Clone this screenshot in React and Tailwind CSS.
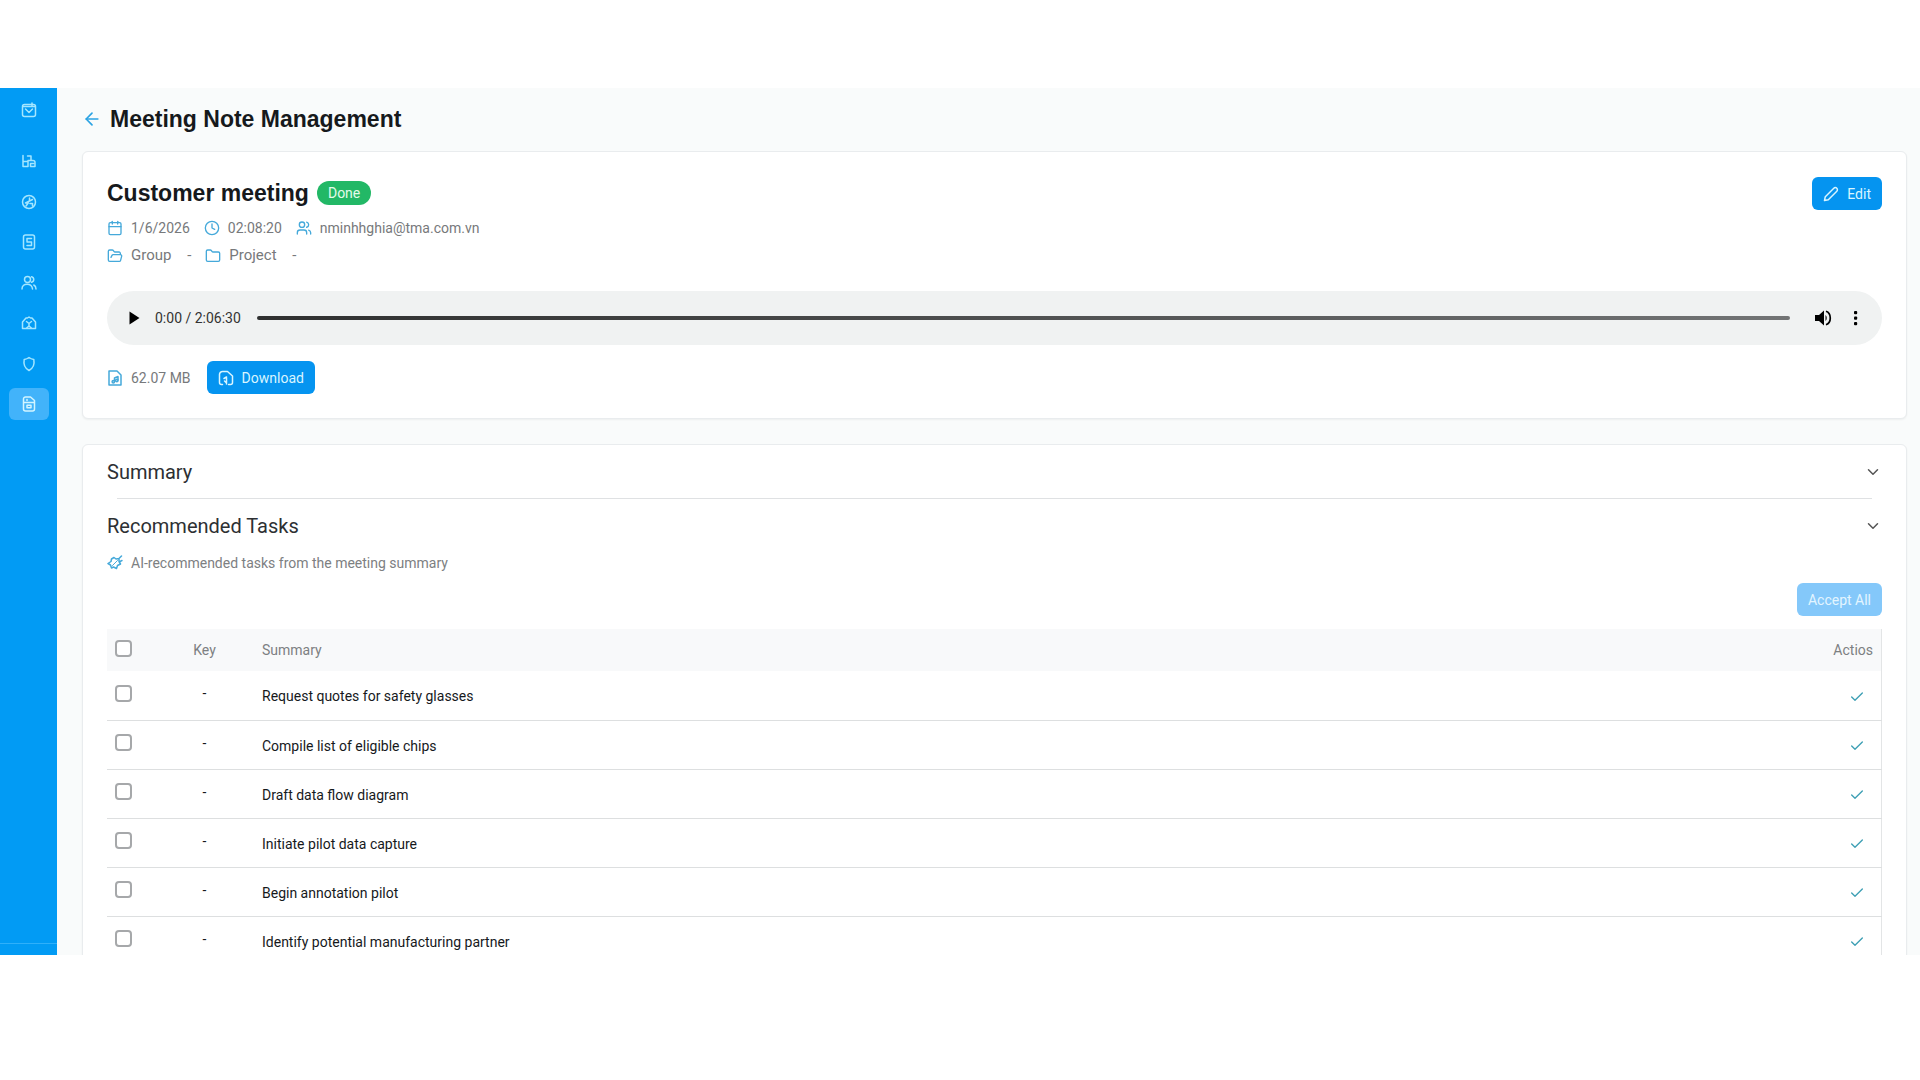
import { useState } from 'react'
import clsx from 'clsx'
import { ArrowLeft, Calendar, Check, ChevronDown, Clock4, Folder, FolderOpen, Users } from 'lucide-react'

const TASKS = [
  'Request quotes for safety glasses',
  'Compile list of eligible chips',
  'Draft data flow diagram',
  'Initiate pilot data capture',
  'Begin annotation pilot',
  'Identify potential manufacturing partner',
]

const NAV = [
  { id: 'reports', label: 'Reports', icon: ReportsIcon },
  { id: 'accounts', label: 'Accounts', icon: AccountIcon },
  { id: 'records', label: 'Records', icon: RecordsIcon },
  { id: 'people', label: 'People', icon: PeopleIcon },
  { id: 'office', label: 'Office', icon: OfficeIcon },
  { id: 'security', label: 'Security', icon: ShieldIcon },
  { id: 'notes', label: 'Meeting notes', icon: NotesIcon },
]

export default function App() {
  return (
    <div className="flex h-screen bg-white pt-[88px] pb-[125px] font-['Roboto',sans-serif] text-sm text-[#16191c]">
      <Sidebar />
      <main className="min-w-0 flex-1 overflow-hidden bg-[#f9fbfb] pr-[13px] pl-[25px]">
        <header className="flex h-[63px] items-center gap-2 pb-0.5">
          <a href="#back" aria-label="Back" className="text-[#2ba3e3]">
            <ArrowLeft size={20} strokeWidth={2} />
          </a>
          <h1 className="font-['Liberation_Sans',sans-serif] text-[23px] leading-8 font-bold">
            Meeting Note Management
          </h1>
        </header>
        <MeetingCard />
        <DetailsCard />
      </main>
    </div>
  )
}

function Sidebar() {
  return (
    <nav className="flex w-[57px] shrink-0 flex-col items-center bg-[#029bf4] pt-1.5 text-[#a4e6ff]">
      <a href="#home" aria-label="Home" className="flex h-8 w-10 items-center justify-center">
        <HomeIcon />
      </a>
      <div className="mt-[19px] flex h-[275px] flex-col justify-between">
        {NAV.map(({ id, label, icon: Icon }) => (
          <a
            key={id}
            href={`#${id}`}
            aria-label={label}
            className={clsx(
              'flex h-8 w-10 items-center justify-center rounded-md',
              id === 'notes' && 'bg-[#42b3fa] text-[#d3f5ff]',
            )}
          >
            <Icon />
          </a>
        ))}
      </div>
      <div className="mt-auto h-3 w-full border-t border-[#2fb0fa]" />
    </nav>
  )
}

function MeetingCard() {
  return (
    <section className="rounded-md border border-[#e9ecee] bg-white px-6 pt-[25px] pb-6 shadow-xs">
      <div className="flex items-start justify-between">
        <div>
          <div className="flex h-8 items-center gap-2">
            <h2 className="font-['Liberation_Sans',sans-serif] text-[23px] leading-8 font-bold">
              Customer meeting
            </h2>
            <span className="rounded-full bg-[#22b866] px-[11px] leading-6 text-[#e4fbe9]">Done</span>
          </div>
          <div className="mt-[5px] flex h-7 items-center gap-3.5">
            <Meta icon={Calendar}>1/6/2026</Meta>
            <Meta icon={Clock4}>02:08:20</Meta>
            <Meta icon={Users}>nminhhghia@tma.com.vn</Meta>
          </div>
          <div className="flex h-7 items-center gap-3.5 text-[15px]">
            <Meta icon={FolderOpen}>
              Group <span className="ml-3">-</span>
            </Meta>
            <Meta icon={Folder}>
              Project <span className="ml-3">-</span>
            </Meta>
          </div>
        </div>
        <button className="flex h-[33px] items-center gap-2 rounded-md bg-[#0594f0] px-[11px] text-[#d9f5ff]">
          <PencilIcon />
          Edit
        </button>
      </div>

      <Player />

      <div className="mt-4 flex items-center gap-4">
        <span className="flex items-center gap-2 text-[#77797b]">
          <AudioFileIcon />
          62.07 MB
        </span>
        <button className="flex h-[33px] items-center gap-2 rounded-md bg-[#0594f0] px-[11px] text-[#d9f5ff]">
          <DownloadIcon />
          Download
        </button>
      </div>
    </section>
  )
}

function Meta({ icon: Icon, children }) {
  return (
    <span className="flex items-center gap-2 text-[#77797b]">
      <Icon size={16} strokeWidth={2} className="text-[#45a9da]" />
      <span>{children}</span>
    </span>
  )
}

function Player() {
  return (
    <div className="mt-[21px] flex h-[54px] items-center rounded-full bg-[#f0f2f2] pr-[18px] pl-[22px] text-black">
      <button aria-label="Play">
        <svg width="12" height="14" viewBox="0 0 12 14" fill="currentColor">
          <path d="M0.5 0.5L10.5 7L0.5 13.5Z" />
        </svg>
      </button>
      <span className="ml-3.5 text-[#333]">0:00 / 2:06:30</span>
      <div className="mr-6 ml-4 h-1 flex-1 rounded-full bg-linear-to-r from-[#2f3030] to-[#727475]" />
      <button aria-label="Mute">
        <svg width="18" height="18" viewBox="0 0 18 18" fill="none">
          <path d="M1 6h4l5-4.500v15L5 12H1z" fill="currentColor" />
          <path d="M11.500 6c1.700 1.300 1.700 4.700 0 6z" fill="currentColor" />
          <path d="M12 2.300c5.700 2 5.700 11.400 0 13.400" stroke="currentColor" strokeWidth="1.700" />
        </svg>
      </button>
      <button aria-label="More options" className="ml-4">
        <svg width="16" height="16" viewBox="0 0 16 16" fill="currentColor">
          <rect x="6" y="1" width="3.200" height="3.200" rx="1" />
          <rect x="6" y="6.500" width="3.200" height="3.200" rx="1" />
          <rect x="6" y="12" width="3.200" height="3.200" rx="1" />
        </svg>
      </button>
    </div>
  )
}

function DetailsCard() {
  return (
    <section className="mt-[25px] rounded-md border border-[#e9ecee] bg-white px-6 shadow-xs">
      <SectionTitle>Summary</SectionTitle>
      <hr className="mx-2.5 border-[#dfe1e3]" />
      <SectionTitle>Recommended Tasks</SectionTitle>
      <p className="flex h-[22px] items-center gap-2 text-[#7d8082]">
        <SparkIcon />
        AI-recommended tasks from the meeting summary
      </p>
      <div className="mt-[9px] flex justify-end">
        <button disabled className="h-[33px] rounded-md bg-[#84c8fa] px-[11px] text-[#e3f5ff]">
          Accept All
        </button>
      </div>
      <TaskTable />
    </section>
  )
}

function SectionTitle({ children }) {
  return (
    <button className="flex h-[53px] w-full items-center justify-between">
      <h3 className="text-xl text-[#2d3033]">{children}</h3>
      <ChevronDown size={18} strokeWidth={2} className="text-[#555]" />
    </button>
  )
}

function TaskTable() {
  const [selected, setSelected] = useState([])
  const allSelected = selected.length === TASKS.length

  const toggle = (task) =>
    setSelected((prev) => (prev.includes(task) ? prev.filter((t) => t !== task) : [...prev, task]))

  return (
    <table className="mt-[13px] w-full table-fixed border-r border-[#e3e5e6]">
      <thead>
        <tr className="h-[42px] bg-[#f8f9fa] text-[#7d8082]">
          <th className="w-14 pb-1 pl-2 text-left">
            <Tick label="Select all" checked={allSelected} onChange={() => setSelected(allSelected ? [] : TASKS)} />
          </th>
          <th className="w-[83px] font-normal">Key</th>
          <th className="pl-4 text-left font-normal">Summary</th>
          <th className="w-24 pr-2 text-right font-normal">Actios</th>
        </tr>
      </thead>
      <tbody>
        {TASKS.map((task) => (
          <tr key={task} className="h-[49px] border-b border-[#dddfe0]">
            <td className="pb-1 pl-2">
              <Tick label={task} checked={selected.includes(task)} onChange={() => toggle(task)} />
            </td>
            <td className="pb-1 text-center">-</td>
            <td className="pt-0.5 pl-4">{task}</td>
            <td className="pr-4 text-right">
              <button aria-label={`Accept ${task}`} className="align-middle text-[#3d9fb4]">
                <Check size={16} strokeWidth={2} />
              </button>
            </td>
          </tr>
        ))}
      </tbody>
    </table>
  )
}

function Tick({ label, checked, onChange }) {
  return (
    <input
      type="checkbox"
      aria-label={label}
      checked={checked}
      onChange={onChange}
      className="block size-[17px] appearance-none rounded-[4px] border-2 border-[#a6a8aa] bg-white checked:bg-[#029bf4]"
    />
  )
}

/* Icons */

function Svg({ size = 16, children }) {
  return (
    <svg
      width={size}
      height={size}
      viewBox="0 0 16 16"
      fill="none"
      stroke="currentColor"
      strokeWidth="1.5"
      strokeLinecap="round"
      strokeLinejoin="round"
    >
      {children}
    </svg>
  )
}

function HomeIcon() {
  return (
    <Svg>
      <rect x="1.500" y="2.500" width="13" height="12" rx="2" />
      <path d="M2 4.500h12M4.500 7l3.500 3.500L11.500 7M11 1v2.500" />
    </Svg>
  )
}

function ReportsIcon() {
  return (
    <Svg>
      <path d="M2 2.500V13.500h5V8.500H3M6.500 3h3.500v4.500H7M10.500 7.500h1.500a2 2 0 0 1 2 2v4h-4.500v-3h3" />
    </Svg>
  )
}

function AccountIcon() {
  return (
    <Svg>
      <circle cx="8" cy="8" r="6.500" />
      <path d="M8.500 4v3l3-1.500M8.500 7L4.500 9h3M5 12l1.500-2M9 9.500h2.500V12" />
    </Svg>
  )
}

function RecordsIcon() {
  return (
    <Svg>
      <rect x="2.500" y="1" width="11" height="14" rx="2" />
      <path d="M6 4.500h4.500M6 8h4.500M6 11.500h4.500M6 4.500v3M10.500 8v3.500" />
    </Svg>
  )
}

function PeopleIcon() {
  return (
    <Svg>
      <circle cx="6.500" cy="4.500" r="3" />
      <path d="M1 14c0-6.500 10-6.500 10.500 0M10.500 1.800c3 .8 3 4.600 0 5.400M12.800 10c1.500.8 2.200 2 2.200 4" />
    </Svg>
  )
}

function OfficeIcon() {
  return (
    <Svg>
      <path d="M1.500 7l3.500-4h1.500L8 2l1.500 1H11l3.500 4v6.500h-13zM5.500 6.500L8 8.500l2.500-2M8 8.500V11M5.500 13L8 11l2.500 2" />
    </Svg>
  )
}

function ShieldIcon() {
  return (
    <Svg>
      <path d="M8 1.500c1.500 1.200 3 1.700 4.800 2 .9 4.700-.6 8.700-4.800 11C3.800 12.200 2.300 8.200 3.200 3.500c1.800-.3 3.300-.8 4.800-2z" />
    </Svg>
  )
}

function NotesIcon() {
  return (
    <Svg>
      <path d="M4.500 1h5L13.500 4.500V13a2 2 0 0 1-2 2h-7a2 2 0 0 1-2-2V3a2 2 0 0 1 2-2zM3 6.500h10M6 3.500v1" />
      <path d="M6 9.200h4v2.500H6z" />
    </Svg>
  )
}

function PencilIcon() {
  return (
    <Svg>
      <path d="M1.500 14.500l.8-3.800 8.500-8.500a2 2 0 0 1 3 3l-8.500 8.500z" />
    </Svg>
  )
}

function DownloadIcon() {
  return (
    <Svg>
      <path d="M4.500 14.500H3.500a2 2 0 0 1-2-2v-8a3 3 0 0 1 3-3h5l5 4.500v6.500a2 2 0 0 1-2 2h-2M8.500 14V7.500M6 8.500l2.500-1.500M6.500 11l2 2" />
    </Svg>
  )
}

function AudioFileIcon() {
  return (
    <span className="text-[#45a9da]">
      <Svg>
        <path d="M2 1h8l4 4v10H2zM7.500 11.500V8l3.500-1.500v3.500" />
        <circle cx="6.300" cy="11.700" r="1.200" />
        <circle cx="9.800" cy="10.500" r="1.200" />
      </Svg>
    </span>
  )
}

function SparkIcon() {
  return (
    <span className="text-[#45a9da]">
      <Svg>
        <path d="M7 2.500l2 1.500 3-.5v3l1.500 2.500-3 1.500-1 3-3-1.500-2 1-1-3L1 8.500l3-2 .5-2.500zM12 3.500L14.500 1M13 6.500l2-1" />
        <path d="M5.500 10.500l5-5" strokeWidth="1" />
      </Svg>
    </span>
  )
}
